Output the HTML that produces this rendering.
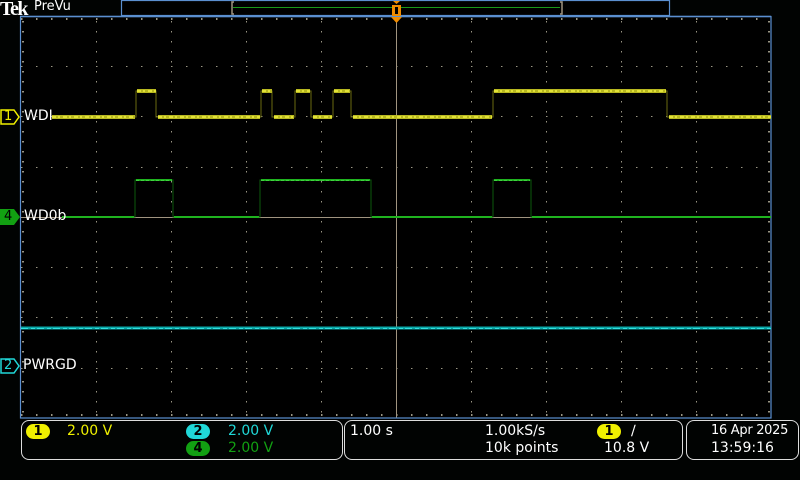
<!DOCTYPE html>
<html><head><meta charset="utf-8"><style>
html,body{margin:0;padding:0;background:#000;width:800px;height:480px;overflow:hidden}
body{position:relative;font-family:"DejaVu Sans","Liberation Sans",sans-serif}
.t{position:absolute;font-size:13px;white-space:nowrap;line-height:14px}
.box{position:absolute;border:1.5px solid #ddd;border-radius:8px;box-sizing:border-box}
.pill{position:absolute;width:24px;height:15px;border-radius:8px;color:#000;font-size:13px;line-height:15px;text-align:center;font-weight:bold}
</style></head><body>
<svg width="800" height="480" style="position:absolute;left:0;top:0">
<defs>
<pattern id="vd" x="0" y="16" width="1" height="10" patternUnits="userSpaceOnUse"><rect x="0" y="5" width="1" height="1.5" fill="#9a9684"/></pattern>
<pattern id="hd" x="21" y="0" width="15" height="1" patternUnits="userSpaceOnUse"><rect x="0" y="0" width="1.5" height="1" fill="#9a9684"/></pattern>
</defs>
<rect x="0" y="0" width="800" height="480" fill="#010302"/>
<rect x="21" y="16" width="750" height="402" fill="#000"/>
<g>
<rect x="96" y="16" width="1" height="402" fill="url(#vd)"/>
<rect x="171" y="16" width="1" height="402" fill="url(#vd)"/>
<rect x="246" y="16" width="1" height="402" fill="url(#vd)"/>
<rect x="321" y="16" width="1" height="402" fill="url(#vd)"/>
<rect x="471" y="16" width="1" height="402" fill="url(#vd)"/>
<rect x="546" y="16" width="1" height="402" fill="url(#vd)"/>
<rect x="621" y="16" width="1" height="402" fill="url(#vd)"/>
<rect x="696" y="16" width="1" height="402" fill="url(#vd)"/>
<rect x="21" y="66" width="750" height="1" fill="url(#hd)"/>
<rect x="21" y="116" width="750" height="1" fill="url(#hd)"/>
<rect x="21" y="167" width="750" height="1" fill="url(#hd)"/>
<rect x="21" y="267" width="750" height="1" fill="url(#hd)"/>
<rect x="21" y="317" width="750" height="1" fill="url(#hd)"/>
<rect x="21" y="368" width="750" height="1" fill="url(#hd)"/>
<rect x="22" y="16" width="2" height="402" fill="url(#vd)"/>
<rect x="768" y="16" width="2" height="402" fill="url(#vd)"/>
<rect x="21" y="18" width="750" height="2" fill="url(#hd)"/>
<rect x="21" y="414" width="750" height="2" fill="url(#hd)"/>
</g>
<line x1="396.5" y1="16" x2="396.5" y2="418" stroke="#a09480" stroke-width="1"/>
<line x1="21" y1="217.5" x2="771" y2="217.5" stroke="#a09480" stroke-width="1"/>
<rect x="20.5" y="16.5" width="750.5" height="401.5" fill="none" stroke="#5b8fd0" stroke-width="1.2"/>
<rect x="121.5" y="0.5" width="548" height="15" fill="#000" stroke="#5b8fd0" stroke-width="1.2"/>
<line x1="20" y1="16.5" x2="771" y2="16.5" stroke="#5b8fd0" stroke-width="1.5"/>
<path d="M234 2H232V14H234M560 2H562V14H560" stroke="#a09480" fill="none" stroke-width="1.5"/>
<line x1="233" y1="7.5" x2="560" y2="7.5" stroke="#1a9a1a" stroke-width="1"/>
<path d="M393 1H400L396.5 4Z" fill="#f08c00"/>
<rect x="392" y="5" width="9" height="11" fill="#f08c00"/>
<rect x="395" y="7" width="3" height="7" fill="#000"/>
<path d="M391 17H402L396.5 23Z" fill="#f08c00"/>
<path d="M21 328H771" stroke="#0aa6a6" stroke-width="3"/>
<path d="M21 328.5H771" stroke="#2fe0e0" stroke-width="1" stroke-dasharray="7 3 4 2"/>
<g fill="none">
<path d="M62 217H135V180H173V217H260V180H371V217H493V180H531V217H771" stroke="#0c5a0c" stroke-width="1"/>
<path d="M62 217H134M174 217H259M372 217H492M532 217H771M136 180H172M261 180H370M494 180H530" stroke="#1fb31f" stroke-width="2"/>
<path d="M136 180.5H172M261 180.5H370M494 180.5H530" stroke="#40d040" stroke-width="1" stroke-dasharray="3 2"/>
</g>
<g fill="none">
<path d="M52 117H136V91H156V117H261V91H272V117H295V91H311V117H333V91H351V117H493V91H667V117H771" stroke="#6a6a10" stroke-width="1"/>
<path d="M52 117H135M158 117H260M274 117H294M313 117H332M353 117H492M669 117H771M137 91H156M262 91H272M296 91H310M334 91H350M494 91H666" stroke="#b8b820" stroke-width="4"/>
<path d="M52 117H135M158 117H260M274 117H294M313 117H332M353 117H492M669 117H771M137 91H156M262 91H272M296 91H310M334 91H350M494 91H666" stroke="#f0f040" stroke-width="1.5" stroke-dasharray="4 2 2 3"/>
</g>
<path d="M1 110H14L19 117L14 124H1Z" fill="#000" stroke="#f0f000" stroke-width="1.5"/>
<path d="M0 209H14L20 217L14 225H0Z" fill="#12a012"/>
<path d="M1 359H14L19 366L14 373H1Z" fill="#000" stroke="#20d8d8" stroke-width="1.5"/>
</svg>
<div class="t" style="left:0;top:-1px;font-family:'Liberation Serif',serif;font-weight:bold;font-size:20px;color:#fff;line-height:20px;letter-spacing:-1.5px">Tek</div>
<div class="t" style="left:34px;top:0px;color:#fff;font-size:13px">PreVu</div>
<div class="t" style="left:4px;top:110px;color:#f0f000;font-size:13px">1</div>
<div class="t" style="left:24px;top:109px;color:#fff;font-size:14px">WDI</div>
<div class="t" style="left:4px;top:210px;color:#000;font-size:13px">4</div>
<div class="t" style="left:24px;top:209px;color:#fff;font-size:14px">WD0b</div>
<div class="t" style="left:4px;top:359px;color:#20d8d8;font-size:13px">2</div>
<div class="t" style="left:23px;top:358px;color:#fff;font-size:14px">PWRGD</div>
<div class="box" style="left:21px;top:420px;width:322px;height:40px"></div>
<div class="box" style="left:344px;top:420px;width:339px;height:40px"></div>
<div class="box" style="left:686px;top:420px;width:113px;height:40px"></div>
<div class="pill" style="left:26px;top:424px;background:#f0f000">1</div>
<div class="t" style="left:67px;top:424px;color:#f0f000;font-size:14px">2.00 V</div>
<div class="pill" style="left:186px;top:424px;background:#20d8d8">2</div>
<div class="t" style="left:228px;top:424px;color:#20d8d8;font-size:14px">2.00 V</div>
<div class="pill" style="left:186px;top:441px;background:#12a012">4</div>
<div class="t" style="left:228px;top:441px;color:#12a012;font-size:14px">2.00 V</div>
<div class="t" style="left:350px;top:424px;color:#fff;font-size:14px">1.00 s</div>
<div class="t" style="left:485px;top:424px;color:#fff;font-size:14px">1.00kS/s</div>
<div class="t" style="left:485px;top:441px;color:#fff;font-size:14px">10k points</div>
<div class="pill" style="left:597px;top:424px;background:#f0f000">1</div>
<div class="t" style="left:631px;top:424px;color:#fff;font-size:14px">∕</div>
<div class="t" style="left:604px;top:441px;color:#fff;font-size:14px">10.8 V</div>
<div class="t" style="left:711px;top:424px;color:#fff;font-size:13px;letter-spacing:-0.3px">16 Apr 2025</div>
<div class="t" style="left:711px;top:441px;color:#fff;font-size:14px">13:59:16</div>
</body></html>
